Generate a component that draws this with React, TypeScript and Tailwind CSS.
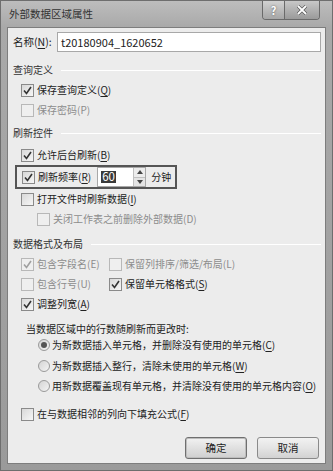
import React from "react";

const font = { fontFamily: '"Noto Sans CJK SC", "Noto Sans", sans-serif' };

function Check({ checked = false, disabled = false }: { checked?: boolean; disabled?: boolean }) {
    return (
        <span
            className={
                "w-[13px] h-[13px] shrink-0 border flex items-center justify-center " +
                (disabled ? "border-[#b8b8b8] bg-[#efefef]" : "border-[#8a8a8a] bg-gradient-to-br from-[#d8d8d8] to-[#f6f6f6]")
            }
        >
            {checked && (
                <svg width="9" height="9" viewBox="0 0 9 9">
                    <path d="M1 4.5 L3.5 7.5 L8 1" fill="none" stroke={disabled ? "#a0a0a0" : "#333"} strokeWidth="1.6" />
                </svg>
            )}
        </span>
    );
}

function Radio({ checked = false }: { checked?: boolean }) {
    return (
        <span className="w-[12px] h-[12px] shrink-0 rounded-full border border-[#9a9a9a] bg-gradient-to-br from-[#d4d4d4] to-[#f4f4f4] flex items-center justify-center">
            {checked && <span className="w-[6px] h-[6px] rounded-full bg-[#555]" />}
        </span>
    );
}

function Row({ children, className = "" }: { children: React.ReactNode; className?: string }) {
    return <div className={"flex items-center h-[20px] whitespace-nowrap " + className}>{children}</div>;
}

function Section({ title, className = "" }: { title: string; className?: string }) {
    return (
        <div className={"flex items-center h-[20px] gap-2 " + className}>
            <span className="text-[#333]">{title}</span>
            <span className="flex-1 h-px bg-[#cfcfcf] border-b border-white" />
        </div>
    );
}

function U({ c }: { c: string }) {
    return <span className="underline underline-offset-2">{c}</span>;
}

export default function App() {
    return (
        <div className="w-[333px] h-[471px] bg-[#9c9c9c] text-[10px] leading-none text-[#222] overflow-hidden flex flex-col whitespace-nowrap" style={font}>
            {/* title bar */}
            <div className="h-[27px] shrink-0 relative bg-gradient-to-b from-[#bdbdbd] to-[#a9a9a9] border-t border-l border-r border-[#6e6e6e]">
                <span className="absolute left-[8px] top-[8px] text-[10.5px] text-[#333]">外部数据区域属性</span>
                <div className="absolute right-[12px] top-0 flex h-[19px] border border-t-0 border-[#6a6a6a] rounded-b-[4px] overflow-hidden">
                    <div className="w-[22px] flex items-center justify-center bg-gradient-to-b from-[#d2d2d2] to-[#a6a6a6] border-r border-[#6a6a6a] text-white font-bold text-[11px]" style={{ textShadow: "0 0 2px #555" }}>?</div>
                    <div className="w-[34px] flex items-center justify-center bg-gradient-to-b from-[#c8c8c8] to-[#9a9a9a]">
                        <svg width="12" height="10" viewBox="0 0 12 10">
                            <path d="M2 1 L10 9 M10 1 L2 9" stroke="#555" strokeWidth="3.2" />
                            <path d="M2 1 L10 9 M10 1 L2 9" stroke="#fff" strokeWidth="1.8" />
                        </svg>
                    </div>
                </div>
            </div>
            {/* frame body */}
            <div className="flex-1 px-[6px] pb-[6px] bg-gradient-to-b from-[#a9a9a9] to-[#9a9a9a] border-l border-r border-b border-[#6e6e6e]">
                <div className="h-full border border-[#7d7d7d] bg-[#ececec] pl-[5px] pr-[4px] flex flex-col">
                    <div className="flex items-center h-[20px] mt-[4px]">
                        <span className="w-[44px] text-[10.5px]">名称(<U c="N" />):</span>
                        <div className="flex-1 h-[20px] border border-[#a8a8a8] bg-white flex items-center px-[3px] text-[11px]">t20180904_1620652</div>
                    </div>
                    <Section title="查询定义" className="mt-[8px]" />
                    <Row className="pl-[8px] gap-[3px]"><Check checked /><span>保存查询定义(<U c="Q" />)</span></Row>
                    <Row className="pl-[8px] gap-[3px] text-[#8c8c8c]"><Check disabled /><span>保存密码(P)</span></Row>
                    <Section title="刷新控件" className="mt-[3px]" />
                    <Row className="pl-[8px] gap-[3px] mt-[2px]"><Check checked /><span>允许后台刷新(<U c="B" />)</span></Row>
                    <div className="ml-[2px] w-[162px] h-[24px] border-2 border-[#555] flex items-center pl-[5px] gap-[3px]">
                        <Check checked />
                        <span>刷新频率(<U c="R" />)</span>
                        <div className="ml-[3px] flex h-[20px] border border-[#a8a8a8] bg-white">
                            <div className="w-[35px] flex items-center pl-[3px] text-[11.5px]">
                                <span className="bg-[#3a3a3a] text-white px-px">60</span>
                            </div>
                            <div className="w-[12px] flex flex-col border-l border-[#c0c0c0]">
                                <div className="flex-1 flex items-center justify-center bg-[#ececec] border-b border-[#c0c0c0]">
                                    <svg width="6" height="4" viewBox="0 0 6 4"><path d="M0 4 L3 0 L6 4Z" fill="#444" /></svg>
                                </div>
                                <div className="flex-1 flex items-center justify-center bg-[#e4e4e4]">
                                    <svg width="6" height="4" viewBox="0 0 6 4"><path d="M0 0 L3 4 L6 0Z" fill="#444" /></svg>
                                </div>
                            </div>
                        </div>
                        <span className="ml-[2px]">分钟</span>
                    </div>
                    <Row className="pl-[8px] gap-[3px] h-[19px]"><Check /><span>打开文件时刷新数据(<U c="I" />)</span></Row>
                    <Row className="pl-[24px] gap-[3px] text-[#8c8c8c]"><Check disabled /><span>关闭工作表之前删除外部数据(D)</span></Row>
                    <Section title="数据格式及布局" className="mt-[5px]" />
                    <Row className="pl-[8px]">
                        <div className="w-[88px] flex items-center gap-[3px] text-[#8c8c8c]"><Check checked disabled /><span>包含字段名(E)</span></div>
                        <div className="flex items-center gap-[3px] text-[#8c8c8c]"><Check disabled /><span>保留列排序/筛选/布局(L)</span></div>
                    </Row>
                    <Row className="pl-[8px]">
                        <div className="w-[88px] flex items-center gap-[3px] text-[#8c8c8c]"><Check disabled /><span>包含行号(U)</span></div>
                        <div className="flex items-center gap-[3px]"><Check checked /><span>保留单元格格式(<U c="S" />)</span></div>
                    </Row>
                    <Row className="pl-[8px] gap-[3px]"><Check checked /><span>调整列宽(<U c="A" />)</span></Row>
                    <Row className="pl-[13px] mt-[5px]"><span>当数据区域中的行数随刷新而更改时:</span></Row>
                    <Row className="pl-[25px] gap-[2px] mt-[-4px]"><Radio checked /><span>为新数据插入单元格，并删除没有使用的单元格(<U c="C" />)</span></Row>
                    <Row className="pl-[25px] gap-[2px] mt-[1px]"><Radio /><span>为新数据插入整行，清除未使用的单元格(<U c="W" />)</span></Row>
                    <Row className="pl-[25px] gap-[2px]"><Radio /><span>用新数据覆盖现有单元格，并清除没有使用的单元格内容(<U c="O" />)</span></Row>
                    <Row className="pl-[8px] gap-[3px] mt-[8px]"><Check /><span>在与数据相邻的列向下填充公式(<U c="F" />)</span></Row>
                    <div className="flex justify-end gap-[10px] mt-[13px] pr-[2px]">
                        <button className="w-[62px] h-[22px] rounded-[3px] border border-[#6f6f6f] bg-gradient-to-b from-[#f2f2f2] via-[#e0e0e0] to-[#cfcfcf] shadow-[inset_0_0_0_1px_#bdbdbd] text-[10.5px] text-[#222]">确定</button>
                        <button className="w-[62px] h-[22px] rounded-[3px] border border-[#8a8a8a] bg-gradient-to-b from-[#f2f2f2] via-[#e4e4e4] to-[#d2d2d2] text-[10.5px] text-[#222]">取消</button>
                    </div>
                </div>
            </div>
        </div>
    );
}
